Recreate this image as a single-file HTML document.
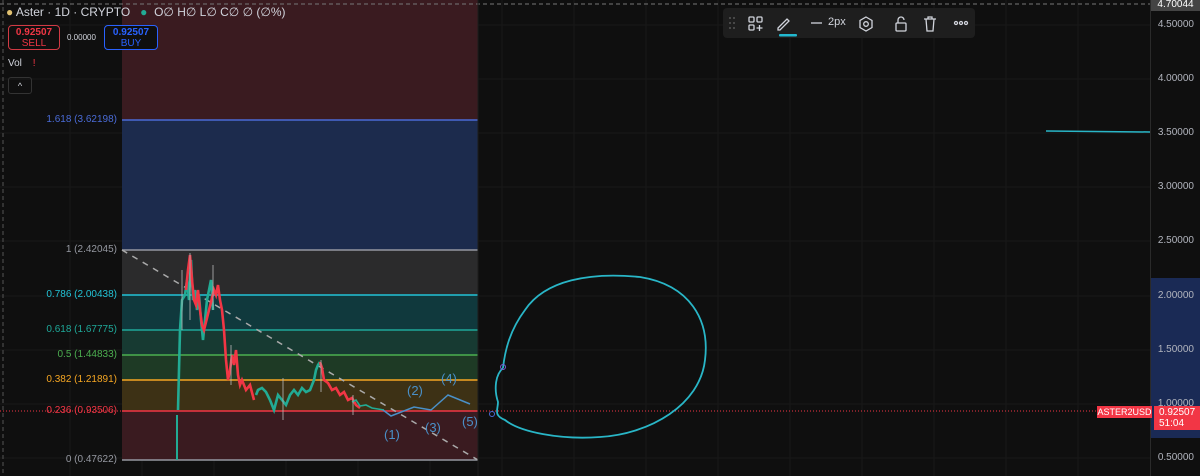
<!DOCTYPE html>
<html><head><style>
body{margin:0;width:1200px;height:476px;background:#0f0f0f;overflow:hidden;font-family:"Liberation Sans",sans-serif;position:relative}
.a{position:absolute}
.ax{position:absolute;right:6px;font-size:10px;color:#b2b5be}
.fl{position:absolute;font-size:10px;text-align:right;width:117px;left:0}
</style></head><body>
<svg class="a" style="left:0;top:0" width="1200" height="476">
<g stroke="#191919" stroke-width="1">
<line x1="70" y1="0" x2="70" y2="476"/><line x1="142" y1="0" x2="142" y2="476"/><line x1="214" y1="0" x2="214" y2="476"/><line x1="286" y1="0" x2="286" y2="476"/><line x1="358" y1="0" x2="358" y2="476"/><line x1="430" y1="0" x2="430" y2="476"/><line x1="502" y1="0" x2="502" y2="476"/><line x1="574" y1="0" x2="574" y2="476"/><line x1="646" y1="0" x2="646" y2="476"/><line x1="718" y1="0" x2="718" y2="476"/><line x1="790" y1="0" x2="790" y2="476"/><line x1="862" y1="0" x2="862" y2="476"/><line x1="934" y1="0" x2="934" y2="476"/><line x1="1006" y1="0" x2="1006" y2="476"/><line x1="1078" y1="0" x2="1078" y2="476"/>
<line x1="0" y1="25" x2="1150" y2="25"/><line x1="0" y1="79" x2="1150" y2="79"/><line x1="0" y1="133" x2="1150" y2="133"/><line x1="0" y1="187" x2="1150" y2="187"/><line x1="0" y1="241" x2="1150" y2="241"/><line x1="0" y1="296" x2="1150" y2="296"/><line x1="0" y1="350" x2="1150" y2="350"/><line x1="0" y1="404" x2="1150" y2="404"/><line x1="0" y1="458" x2="1150" y2="458"/>
</g>
<rect x="122" y="0" width="356" height="120" fill="#3a1b20"/>
<rect x="122" y="120" width="356" height="130" fill="#1c2b4d"/>
<rect x="122" y="250" width="356" height="45" fill="#2b2b2c"/>
<rect x="122" y="295" width="356" height="35" fill="#10393d"/>
<rect x="122" y="330" width="356" height="25" fill="#173a32"/>
<rect x="122" y="355" width="356" height="25" fill="#1e3a25"/>
<rect x="122" y="380" width="356" height="31" fill="#3d3115"/>
<rect x="122" y="411" width="356" height="49" fill="#3a1b20"/>
<line x1="122" y1="120" x2="478" y2="120" stroke="#4a6bd6" stroke-width="1.5"/>
<line x1="122" y1="250" x2="478" y2="250" stroke="#9598a1" stroke-width="1.5"/>
<line x1="122" y1="295" x2="478" y2="295" stroke="#22c3d6" stroke-width="1.5"/>
<line x1="122" y1="330" x2="478" y2="330" stroke="#1fa899" stroke-width="1.5"/>
<line x1="122" y1="355" x2="478" y2="355" stroke="#4caf50" stroke-width="1.5"/>
<line x1="122" y1="380" x2="478" y2="380" stroke="#f5a623" stroke-width="1.5"/>
<line x1="122" y1="411" x2="478" y2="411" stroke="#f23645" stroke-width="1.5"/>
<line x1="122" y1="460" x2="478" y2="460" stroke="#9598a1" stroke-width="1.5"/>
<line x1="0" y1="411" x2="1150" y2="411" stroke="#f23645" stroke-width="1" stroke-dasharray="1,2"/>
<line x1="0" y1="4" x2="1150" y2="4" stroke="#777" stroke-dasharray="4,3"/>
<line x1="3" y1="0" x2="3" y2="476" stroke="#555" stroke-dasharray="4,3"/>
<line x1="122" y1="250" x2="478" y2="460" stroke="#aaa" stroke-width="1.5" stroke-dasharray="6,6"/>
<line x1="478" y1="0" x2="478" y2="476" stroke="#1c1c1c"/>
<g stroke-width="2.6">
<line x1="177" y1="460" x2="177" y2="415" stroke="#22ab94" stroke-width="2"/>
<polyline fill="none" stroke="#22ab94" points="178,410 180,330 182,300 185,295 187,280 189,300 191,260 193,300 195,290 197,310 199,295 201,320 203,340 205,320 207,300 209,290 211,280 213,310"/>
<polyline fill="none" stroke="#f23645" points="186,290 188,270 190,255 192,280 194,300 196,305 198,290 200,310 202,325 204,330 214,290 216,295 218,285 220,300 222,310 224,330 226,360 228,380 230,370 232,355 234,365 236,350 238,375 240,385 242,380 246,390 250,385 254,400"/>
<polyline fill="none" stroke="#22ab94" points="256,395 258,390 262,388 266,392 270,400 274,410 278,395 282,400 286,405 290,395 294,390 298,395 302,388 306,392 310,390 314,380 316,370 318,365 320,362"/>
<polyline fill="none" stroke="#f23645" points="320,362 322,368 324,380 328,383 332,390 336,388 340,395 344,392 348,400 352,398 356,405 360,408"/>
<polyline fill="none" stroke="#22ab94" stroke-width="1.6" points="352,402 356,400 360,406 366,405 372,408 378,409 384,410"/>
</g>
<g stroke="#b8b8b8" stroke-width="1" opacity="0.8">
<line x1="182" y1="270" x2="182" y2="330"/><line x1="190" y1="253" x2="190" y2="320"/><line x1="213" y1="265" x2="213" y2="310"/><line x1="231" y1="345" x2="231" y2="385"/><line x1="283" y1="378" x2="283" y2="420"/><line x1="321" y1="360" x2="321" y2="392"/><line x1="353" y1="395" x2="353" y2="415"/>
</g>
<polyline fill="none" stroke="#4a90c8" stroke-width="1.5" points="383,410 391,416 414,407 431,410 448,395 470,404"/>
<path d="M503,368 C495,375 494,390 498,402 C498,410 493,415 505,420 C520,432 560,440 600,437 C650,434 700,405 705,360 C710,320 690,285 640,277 C590,272 545,280 525,310 C510,330 505,350 503,368" fill="none" stroke="#29b6c7" stroke-width="1.8"/>
<circle cx="503" cy="367" r="2.5" fill="none" stroke="#7b5cd6"/>
<circle cx="492" cy="414" r="2.5" fill="none" stroke="#4a6bd6"/>
<line x1="1046" y1="131" x2="1150" y2="132" stroke="#29b6c7" stroke-width="1.5"/>
<line x1="1150.5" y1="0" x2="1150.5" y2="476" stroke="#2a2a2a"/>
<rect x="1151" y="278" width="49" height="160" fill="#1a2a55"/>
</svg>
<div class="fl" style="top:114px;color:#4a6bd6">1.618 (3.62198)</div>
<div class="fl" style="top:244px;color:#9598a1">1 (2.42045)</div>
<div class="fl" style="top:289px;color:#22c3d6">0.786 (2.00438)</div>
<div class="fl" style="top:324px;color:#1fa899">0.618 (1.67775)</div>
<div class="fl" style="top:349px;color:#4caf50">0.5 (1.44833)</div>
<div class="fl" style="top:374px;color:#f5a623">0.382 (1.21891)</div>
<div class="fl" style="top:405px;color:#f23645">0.236 (0.93506)</div>
<div class="fl" style="top:454px;color:#9598a1">0 (0.47622)</div>
<div class="a" style="left:384px;top:427px;color:#4a90c8;font-size:13px">(1)</div>
<div class="a" style="left:407px;top:383px;color:#4a90c8;font-size:13px">(2)</div>
<div class="a" style="left:425px;top:420px;color:#4a90c8;font-size:13px">(3)</div>
<div class="a" style="left:441px;top:371px;color:#4a90c8;font-size:13px">(4)</div>
<div class="a" style="left:462px;top:414px;color:#4a90c8;font-size:13px">(5)</div>
<div class="a" style="left:6px;top:5px;font-size:12px;color:#d1d4dc;white-space:nowrap"><span style="color:#e0c070">●</span> Aster · 1D · CRYPTO &nbsp; <span style="color:#22ab94">●</span> &nbsp;O∅ H∅ L∅ C∅ ∅ (∅%)</div>
<div class="a" style="left:8px;top:25px;width:52px;height:25px;border:1px solid #d13a44;border-radius:4px;background:#0f0f0f;text-align:center;font-size:10px;line-height:11px;padding-top:1px;color:#f23645;box-sizing:border-box"><b>0.92507</b><br>SELL</div>
<div class="a" style="left:67px;top:33px;font-size:8px;color:#d1d4dc">0.00000</div>
<div class="a" style="left:104px;top:25px;width:54px;height:25px;border:1px solid #2962ff;border-radius:4px;background:#0f0f0f;text-align:center;font-size:10px;line-height:11px;padding-top:1px;color:#2962ff;box-sizing:border-box"><b>0.92507</b><br>BUY</div>
<div class="a" style="left:8px;top:58px;font-size:10px;color:#d1d4dc">Vol <span style="color:#f23645;margin-left:8px">!</span></div>
<div class="a" style="left:8px;top:77px;width:22px;height:15px;border:1px solid #333;border-radius:3px;color:#d1d4dc;font-size:9px;text-align:center;line-height:16px">^</div>
<div class="a" style="left:723px;top:8px;width:252px;height:30px;background:#1e1e1e;border-radius:4px"></div>
<svg class="a" style="left:723px;top:8px" width="252" height="30" fill="none" stroke="#d1d4dc" stroke-width="1.3">
<g fill="#555" stroke="none"><circle cx="7" cy="10" r="1"/><circle cx="11" cy="10" r="1"/><circle cx="7" cy="15" r="1"/><circle cx="11" cy="15" r="1"/><circle cx="7" cy="20" r="1"/><circle cx="11" cy="20" r="1"/></g>
<rect x="26" y="9" width="5" height="5" rx="1"/><rect x="34" y="9" width="5" height="5" rx="1"/><rect x="26" y="17" width="5" height="5" rx="1"/><path d="M36.5 17v6M33.5 20h6"/>
<path d="M55 20l9-9 2 2-9 9h-2z"/>
<rect x="56" y="26" width="18" height="2.5" rx="1" fill="#22b8cf" stroke="none"/>
<path d="M88 15h11"/>
<path d="M143 9l6 3.5v7l-6 3.5-6-3.5v-7z"/><circle cx="143" cy="16" r="2.3"/>
<rect x="173" y="15" width="10" height="8" rx="1"/><path d="M175 15v-3a3 3 0 0 1 6 0"/>
<path d="M201 11h12M205 11v-2h4v2M203 11l1 12h6l1-12"/>
<circle cx="233" cy="15" r="1.5"/><circle cx="238" cy="15" r="1.5"/><circle cx="243" cy="15" r="1.5"/>
</svg>
<div class="a" style="left:828px;top:16px;font-size:11px;color:#d1d4dc">2px</div>
<div class="a" style="left:1151px;top:0;width:49px;height:11px;background:#444;color:#fff;font-size:10px;text-align:center;line-height:10px">4.70044</div>
<div class="ax" style="top:19px">4.50000</div>
<div class="ax" style="top:73px">4.00000</div>
<div class="ax" style="top:127px">3.50000</div>
<div class="ax" style="top:181px">3.00000</div>
<div class="ax" style="top:235px">2.50000</div>
<div class="ax" style="top:290px">2.00000</div>
<div class="ax" style="top:344px">1.50000</div>
<div class="ax" style="top:398px">1.00000</div>
<div class="ax" style="top:452px">0.50000</div>
<div class="a" style="left:1097px;top:406px;width:55px;height:12px;background:#f23645;color:#fff;font-size:9px;text-align:center;line-height:12px">ASTER2USD</div>
<div class="a" style="left:1154px;top:406px;width:46px;height:24px;background:#f23645;color:#fff;font-size:10px;line-height:11px;padding:1px 0 0 5px;box-sizing:border-box">0.92507<br>51:04</div>
</body></html>
